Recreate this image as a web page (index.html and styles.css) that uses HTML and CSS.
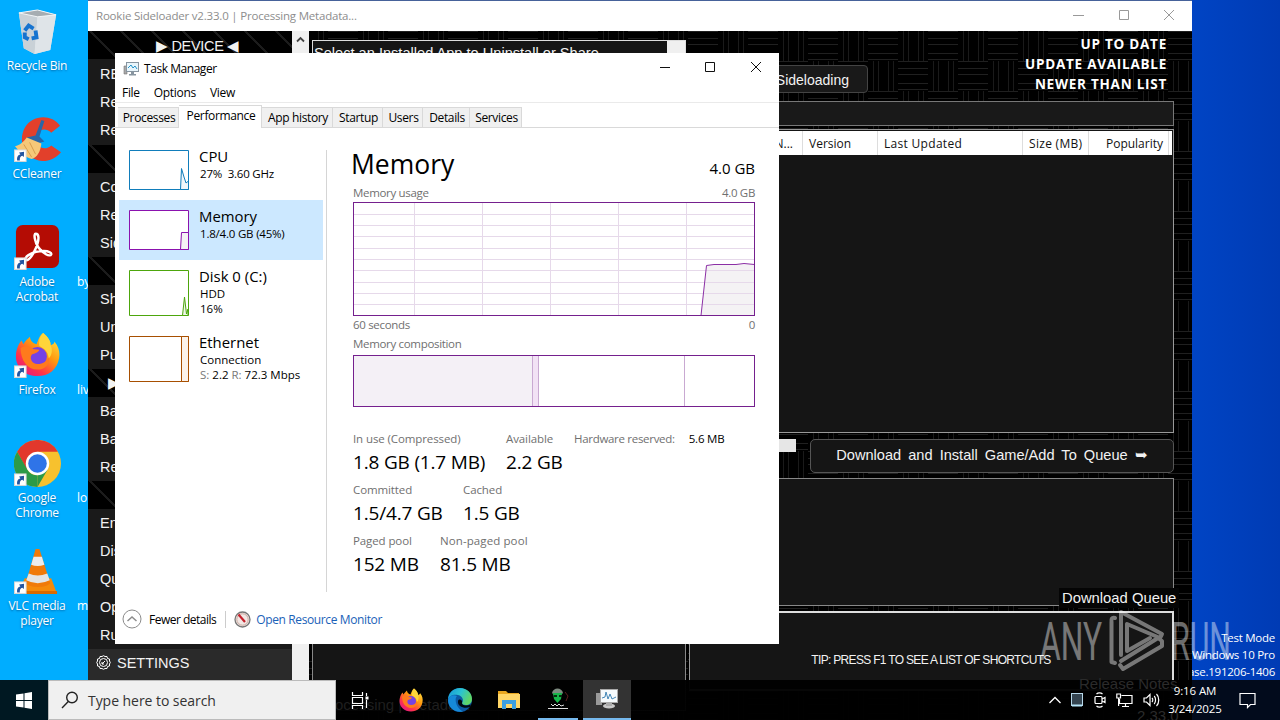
FILE: index.html
```html
<!DOCTYPE html>
<html lang="en">
<head>
  <meta charset="utf-8">
  <title>Desktop</title>
  <link rel="stylesheet" href="styles.css">
</head>
<body>
  <svg class="defs" width="0" height="0">
    <defs>
      <symbol id="shortcut" viewBox="0 0 12 12">
        <rect x=".5" y=".5" width="11" height="11" fill="#fff" stroke="#d5d5d5"/>
        <path d="M3 10.500C2.500 7 4 5 6 4.800L4.800 3L9.500 2.300L9.300 7.200L7.800 6C6 6.500 5.300 8 5.500 10.500Z" fill="#2456a0"/>
      </symbol>
      <linearGradient id="ffBody" x1="1" y1="0" x2="0.2" y2="1">
        <stop offset="0" stop-color="#fff44f"/><stop offset=".45" stop-color="#ff980e"/><stop offset=".75" stop-color="#ff3647"/><stop offset="1" stop-color="#e31587"/>
      </linearGradient>
      <symbol id="firefox" viewBox="0 0 48 48">
        <path d="M30 1C36 6 38 10 38 14C41 13 42 12 42 10C47 16 48 22 47 28C45 40 36 47 24 47C11 47 1 38 1 26C1 19 4 12 7 9L9 13C11 9 14 7 16 5C16 9 19 12 23 13C25 8 26 4 30 1Z" fill="url(#ffBody)"/>
        <circle cx="24" cy="26" r="10" fill="#7542e5"/>
        <path d="M6 17C11 14 16 15 19 18L26 19C25 22 21 23 18 24C15 28 18 34 24 34C30 34 35 31 36 26C38 34 32 40 24 40C13 40 6 30 6 17Z" fill="#ff7a1c"/>
        <path d="M30 1C36 6 38 10 38 14C40 18 40 24 36 28C35 20 31 18 26 15C25 9 27 4 30 1Z" fill="#ffd53a"/>
      </symbol>
      <linearGradient id="edgeTop" x1="0" y1="0" x2="1" y2=".4">
        <stop offset="0" stop-color="#1595d8"/><stop offset=".55" stop-color="#2bc3d2"/><stop offset="1" stop-color="#5fd668"/>
      </linearGradient>
      <pattern id="weave" x="808" y="31" width="60" height="60" patternUnits="userSpaceOnUse">
        <g stroke="#202020">
          <path d="M0 .5H30M0 7.500H30M0 13.500H30M0 22.500H30M0 28.500H30"/>
          <path d="M35.500 0V30M40.500 0V30M50.500 0V30M55.500 0V30" stroke="#1a1a1a"/>
          <path d="M30 30.500H60M30 37.500H60M30 43.500H60M30 52.500H60M30 58.500H60"/>
          <path d="M5.500 30V60M10.500 30V60M20.500 30V60M25.500 30V60" stroke="#1a1a1a"/>
        </g>
      </pattern>
    </defs>
  </svg>

  <div class="desktop">
    <div class="shortcuts">
      <div class="shortcut">
        <svg class="shortcut-icon" viewBox="0 0 48 48">
          <path d="M5 5L24 2L43 7L37 43L21 47L10 41Z" fill="#dfe5e9"/>
          <path d="M5 5L24 9L21 47L10 41Z" fill="#c9d1d7"/>
          <path d="M24 9L43 7L37 43L21 47Z" fill="#dfe4e8"/>
          <path d="M5 5L24 2L43 7L24 9Z" fill="#a6adb2" stroke="#f3f6f8"/>
          <g fill="none" stroke="#1673cf" stroke-width="4"><path d="M11 23L15 18L20 21"/><path d="M22 23L23 30L18 31"/><path d="M15 32L11 30L11 25"/></g>
        </svg>
        <span>Recycle Bin</span>
      </div>
      <div class="shortcut">
        <svg class="shortcut-icon" viewBox="0 0 48 48">
          <path d="M47 10C38-3 18-1 11 12C3 27 12 45 29 46C37 46 43 43 48 37L38 30C32 36 22 32 22 23C22 14 32 11 38 17Z" fill="#e2402b"/>
          <path d="M28 4L31 5L26 21L31 26L20 29L13 22L22 20Z" fill="#2867a8"/>
          <path d="M13 22L28 28C27 36 24 42 18 44C10 42 5 36 1 31C6 30 10 26 13 22Z" fill="#f6c878"/>
          <path d="M10 29L18 42M16 27L22 39" stroke="#d69c4c"/>
          <use href="#shortcut" x="0" y="34" width="13" height="13"/>
        </svg>
        <span>CCleaner</span>
      </div>
      <div class="shortcut">
        <svg class="shortcut-icon" viewBox="0 0 48 48">
          <rect x="2" y="1" width="44" height="44" rx="7" fill="#b40c04"/>
          <path d="M22 10C20 10 21 18 25 24C29 30 37 34 38 31C39 27 25 26 16 31C12 33 10 37 13 37C18 36 25 21 25 14C25 11 24 10 22 10Z" fill="none" stroke="#fff" stroke-width="2.500"/>
          <use href="#shortcut" x="0" y="34" width="13" height="13"/>
        </svg>
        <span>Adobe<br>Acrobat</span>
      </div>
      <div class="shortcut">
        <svg class="shortcut-icon" viewBox="0 0 48 48">
          <use href="#firefox" x="1" y="0" width="46" height="46"/>
          <use href="#shortcut" x="0" y="34" width="13" height="13"/>
        </svg>
        <span>Firefox</span>
      </div>
      <div class="shortcut">
        <svg class="shortcut-icon" viewBox="0 0 48 48">
          <circle cx="24" cy="24" r="24" fill="#f7c12e"/>
          <path d="M24 24L13 30L3.200 12A24 24 0 0 1 44.800 12H24Z" fill="#e2382c"/>
          <path d="M3.200 12L13.600 30A12 12 0 0 0 24 36L24 48A24 24 0 0 1 3.200 12Z" fill="#2c9a47"/>
          <path d="M24 36L34.400 30L24 48Z" fill="#2c9a47"/>
          <circle cx="24" cy="24" r="12" fill="#fff"/><circle cx="24" cy="24" r="9.500" fill="#2f74e8"/>
          <use href="#shortcut" x="0" y="34" width="13" height="13"/>
        </svg>
        <span>Google<br>Chrome</span>
      </div>
      <div class="shortcut">
        <svg class="shortcut-icon" viewBox="0 0 48 48">
          <path d="M11 31H38L44 47H4Z" fill="#f58a0b"/>
          <path d="M4 44H44V47H4Z" fill="#d96a00"/>
          <path d="M22 1H26L37 36C33 41 16 41 12 36Z" fill="#f07a0a"/>
          <path d="M20 9H28.500L31 17Q24 20 17.500 17Z" fill="#ececec"/>
          <path d="M15 26Q24 30 34 26L36.500 33Q24 39 12.500 33Z" fill="#e4e4e4"/>
          <use href="#shortcut" x="0" y="34" width="13" height="13"/>
        </svg>
        <span>VLC media<br>player</span>
      </div>
    </div>
    <div class="file-labels">
      <span>by</span><span>liv</span><span>lo</span><span>m</span>
    </div>
    <div class="build-info">Test Mode<br>Windows 10 Pro<br><span>Build 19041.vb_release.191206-1406</span></div>

    <!-- Sideloader window -->
    <div class="sideloader">
      <div class="sl-titlebar">
        <span>Rookie Sideloader v2.33.0 | Processing Metadata...</span>
        <svg width="104" height="12" viewBox="0 0 104 12" fill="none" stroke="#999"><path d="M1 6.500H12M47.500 1.500H56.500V10.500H47.500ZM92 1L102 11M102 1L92 11"/></svg>
      </div>
      <div class="sl-body">
        <div class="sl-menu">
          <div class="sl-head sl-device">▶ DEVICE ◀</div>
          <div class="sl-group sl-first"><div>RE</div><div>Re</div><div>Re</div></div>
          <div class="sl-head"></div>
          <div class="sl-group"><div>Co</div><div>Re</div><div>Sid</div></div>
          <div class="sl-head"></div>
          <div class="sl-group"><div>Sh</div><div>Un</div><div>Pu</div></div>
          <div class="sl-head sl-arrow">▶</div>
          <div class="sl-group"><div>Ba</div><div>Ba</div><div>Re</div></div>
          <div class="sl-head"></div>
          <div class="sl-group"><div>En</div><div>Dis</div><div>Qu</div><div>Op</div><div>Ru</div></div>
          <div class="sl-settings">
            <svg width="15" height="15" viewBox="0 0 15 15" fill="none" stroke="#fff"><path d="M4 1.500H6L7.500.7L9 1.500H11L11.500 3.500L13.500 4V6L14.300 7.500L13.500 9V11L11.500 11.500L11 13.500H9L7.500 14.300L6 13.500H4L3.500 11.500L1.500 11V9L.7 7.500L1.500 6V4L3.500 3.500Z"/><circle cx="7.500" cy="7.500" r="4"/><path d="M6 9L9 6M6 7V9H8"/></svg>
            <span>SETTINGS</span>
          </div>
        </div>
        <div class="sl-scroll">
          <svg width="17" height="17" viewBox="0 0 17 17"><path d="M5 10.500L8.500 7L12 10.500" fill="none" stroke="#444" stroke-width="1.800"/></svg>
        </div>
        <div class="sl-main">
          <svg class="sl-weave" viewBox="309 31 883 689"><rect x="309" y="31" width="883" height="689" fill="url(#weave)"/></svg>
          <div class="sl-left">
            <div class="sl-combo"><span>Select an Installed App to Uninstall or Share</span><i></i></div>
            <div class="sl-notes"></div>
          </div>
          <div class="sl-right">
            <div class="sl-top">
              <div class="sl-button">Disable Sideloading</div>
              <div class="sl-legend">UP TO DATE<br>UPDATE AVAILABLE<br>NEWER THAN LIST</div>
            </div>
            <div class="sl-search"></div>
            <div class="sl-list">
              <div class="sl-columns">
                <div class="c-name">N...</div><div class="c-version">Version</div><div class="c-updated">Last Updated</div><div class="c-size">Size (MB)</div><div class="c-pop">Popularity</div>
              </div>
            </div>
            <div class="sl-actions">
              <i></i>
              <div class="sl-download">Download and Install Game/Add To Queue ➥</div>
            </div>
            <div class="sl-queue"><span>Download Queue</span></div>
            <div class="sl-tip">TIP: PRESS F1 TO SEE A LIST OF SHORTCUTS</div>
          </div>
        </div>
      </div>
    </div>

    <!-- Task Manager window -->
    <div class="taskmgr">
      <div class="tm-titlebar">
        <svg width="16" height="16" viewBox="0 0 16 16"><path d="M1 5H4V13H1Z" fill="#a8a8a8" stroke="#777" stroke-width=".6"/><rect x="3.500" y="1.500" width="12" height="9" fill="#e8f5fb" stroke="#8795a0"/><path d="M5 7L8 4L10 7L12 5L14 8" fill="none" stroke="#2693c9"/><path d="M8 11H11V13H13V14.500H6V13H8Z" fill="#8795a0"/></svg>
        <span>Task Manager</span>
        <svg class="tm-controls" width="104" height="12" viewBox="0 0 104 12" fill="none" stroke="#111"><path d="M2 6.500H12M47.500 1.500H56.500V10.500H47.500ZM93 1L103 11M103 1L93 11"/></svg>
      </div>
      <div class="tm-menu"><span>File</span><span>Options</span><span>View</span></div>
      <div class="tm-tabs">
        <div class="t-processes">Processes</div><div class="t-performance active">Performance</div><div class="t-history">App history</div><div class="t-startup">Startup</div><div class="t-users">Users</div><div class="t-details">Details</div><div class="t-services">Services</div>
      </div>
      <div class="tm-content">
        <div class="tm-list">
          <div class="tm-item">
            <svg width="60" height="40" viewBox="0 0 60 40"><path d="M.5.500H59.500V39.500H.5Z" fill="#fff" stroke="#117dbb"/><path d="M51.500 39.500L52.500 18.500L55 27L57 33L59.500 31V39.500Z" fill="#f1f6fa" stroke="#117dbb"/></svg>
            <div><h3>CPU</h3><p class="tight">27%&nbsp; 3.60 GHz</p></div>
          </div>
          <div class="tm-item selected">
            <svg width="60" height="40" viewBox="0 0 60 40"><path d="M.5.500H59.500V39.500H.5Z" fill="#fff" stroke="#8b12ae"/><path d="M51.500 39.500L52.500 22.500H59.500V39.500Z" fill="#f4f2f4" stroke="#8b12ae"/></svg>
            <div><h3>Memory</h3><p class="tight">1.8/4.0 GB (45%)</p></div>
          </div>
          <div class="tm-item">
            <svg width="60" height="46" viewBox="0 0 60 46"><path d="M.5.500H59.500V45.500H.5Z" fill="#fff" stroke="#4da60c"/><path d="M53.500 45.500L55.500 27L57.500 44L59 39V45.500Z" fill="#eff7e9" stroke="#4da60c"/></svg>
            <div><h3>Disk 0 (C:)</h3><p>HDD</p><p>16%</p></div>
          </div>
          <div class="tm-item">
            <svg width="60" height="46" viewBox="0 0 60 46"><path d="M.5.500H59.500V45.500H.5Z" fill="#fff" stroke="#a74f01"/><path d="M52.500.500H59.500V45.500H52.500Z" fill="#fcf3eb" stroke="#a74f01"/></svg>
            <div><h3>Ethernet</h3><p>Connection</p><p><em>S:</em> 2.2 <em>R:</em>&nbsp;72.3 Mbps</p></div>
          </div>
        </div>
        <div class="tm-detail">
          <div class="tm-heading"><h1>Memory</h1><span>4.0 GB</span></div>
          <div class="tm-caption c-usage"><span>Memory usage</span><span>4.0 GB</span></div>
          <svg class="tm-graph" width="402" height="114" viewBox="0 0 402 114">
            <path d="M348 113.500L353.500 63.500L361 62.500H383L391 61.500L401.500 62.500V113.500Z" fill="#f4f2f4"/>
            <path d="M61.500 0V114M129.500 0V114M197.500 0V114M265.500 0V114M333.500 0V114M0 12.500H402M0 23.500H402M0 34.500H402M0 46.500H402M0 57.500H402M0 68.500H402M0 80.500H402M0 91.500H402M0 102.500H402" stroke="#e6d9ea"/>
            <path d="M348 113.500L353.500 63.500L361 62.500H383L391 61.500L401.500 62.500" fill="none" stroke="#8b2fa5"/>
            <rect x=".5" y=".5" width="401" height="113" fill="none" stroke="#75208e"/>
          </svg>
          <div class="tm-caption c-seconds"><span>60 seconds</span><span>0</span></div>
          <div class="tm-caption c-comp"><span>Memory composition</span></div>
          <svg class="tm-graph" width="402" height="52" viewBox="0 0 402 52">
            <path d="M0 0H180V52H0Z" fill="#f4f0f6"/><path d="M180 0H185V52H180Z" fill="#f2e2f5"/>
            <path d="M179.500 0V52M185.500 0V52M331.500 0V52" stroke="#c9a9d2"/>
            <rect x=".5" y=".5" width="401" height="51" fill="none" stroke="#75208e"/>
          </svg>
          <div class="tm-stats">
            <div class="tm-row">
              <div class="s-use"><label>In use (Compressed)</label><b>1.8 GB (1.7 MB)</b></div>
              <div class="s-avail"><label>Available</label><b>2.2 GB</b></div>
              <div class="s-hw"><label>Hardware reserved:</label><span>5.6 MB</span></div>
            </div>
            <div class="tm-row">
              <div class="s-commit"><label>Committed</label><b>1.5/4.7 GB</b></div>
              <div><label>Cached</label><b>1.5 GB</b></div>
            </div>
            <div class="tm-row">
              <div class="s-paged"><label>Paged pool</label><b>152 MB</b></div>
              <div class="s-nonpaged"><label>Non-paged pool</label><b>81.5 MB</b></div>
            </div>
          </div>
        </div>
      </div>
      <div class="tm-footer">
        <svg width="20" height="20" viewBox="0 0 20 20" fill="none"><circle cx="10" cy="10" r="9" stroke="#8c8c8c"/><path d="M5.500 12L10 8L14.500 12" stroke="#8c8c8c" stroke-width="1.500"/></svg>
        <span class="tm-fewer">Fewer details</span>
        <svg width="17" height="17" viewBox="0 0 17 17"><circle cx="8.500" cy="8.500" r="7.500" fill="#f2e7e4" stroke="#777" stroke-width="1.300"/><circle cx="8.500" cy="8.500" r="5.700" fill="none" stroke="#c9a9a0"/><path d="M4.500 3.500L11 11" stroke="#c5202b" stroke-width="2.200"/></svg>
        <span class="tm-link">Open Resource Monitor</span>
      </div>
    </div>

    <!-- Recorder watermark -->
    <svg class="watermark" width="200" height="70" viewBox="1035 605 200 70">
      <g font-family="Roboto" font-size="53" fill="#fff">
        <text x="1040" y="659.500" textLength="62" lengthAdjust="spacingAndGlyphs">ANY</text>
        <text x="1171" y="659.500" textLength="60" lengthAdjust="spacingAndGlyphs">RUN</text>
      </g>
      <g fill="none" stroke="#fff" stroke-width="4" stroke-linejoin="round" stroke-linecap="round">
        <path d="M1115 618C1112 617 1111 619 1111.500 622V662L1115 663"/>
        <path d="M1121 655V612L1162 634L1160 638L1127 624"/>
        <path d="M1120 665L1123 669L1162 646L1162 641L1158 638L1121 661"/>
        <path d="M1127 625V651L1150 638"/>
      </g>
    </svg>

    <div class="taskbar">
      <div class="start"><svg width="17" height="17" viewBox="0 0 17 17" fill="#fff"><path d="M0 2.500L7.500 1.500V8H0ZM8.500 1.300L16 0V8H8.500ZM0 9H7.500V15.500L0 14.500ZM8.500 9H16V17L8.500 15.700Z"/></svg></div>
      <div class="search">
        <svg width="18" height="18" viewBox="0 0 18 18" fill="none" stroke="#222" stroke-width="1.400"><circle cx="11" cy="6.500" r="5.300"/><path d="M7.300 10.500L1 17"/></svg>
        <span>Type here to search</span>
      </div>
      <div class="apps">
        <div class="app"><svg width="18" height="17" viewBox="0 0 18 17" fill="none" stroke="#fff" stroke-width="1.200"><path d="M1.500 0V3.500H11.500V0M1.500 5.500H11.500V11.500H1.500ZM1.500 17V13.500H11.500V17M15.500 1V4M15.500 8V16"/><path d="M14.500 4.500H17.500V7.500H14.500Z" fill="#fff" stroke="none"/></svg></div>
        <div class="app"><svg width="24" height="24"><use href="#firefox" width="24" height="24"/></svg></div>
        <div class="app"><svg width="24" height="24" viewBox="0 0 24 24"><circle cx="12" cy="12" r="12" fill="#0c59a4"/><path d="M0 12C0 5 5 0 12 0C19 0 24 5 24 11C24 15 21 17 18 17C15 17 14 16 14 15C16 13 15 8 10 7C5 6 1 8 0 12Z" fill="url(#edgeTop)"/><path d="M0 12C1 8 5 6 9 8C6 11 8 20 15 23.600C6 25 0 19 0 12Z" fill="#1689d8"/><path d="M14 15C14 17 17 18.500 23 16.500L22 19C17 21 9 19 10 13C11 10 15 12 14 15Z" fill="#010a12"/></svg></div>
        <div class="app"><svg width="22" height="20" viewBox="0 0 22 20"><path d="M0 1H8L10 3H21V18H0Z" fill="#e9a720"/><path d="M0 4H22V18H0Z" fill="#ffd667"/><path d="M4 10H18V19H14V14H8V19H4Z" fill="#3c9fe0"/></svg></div>
        <div class="app running"><svg width="24" height="24" viewBox="0 0 24 24"><path d="M6 6C7 0 16 0 17 6L15 8H8Z" fill="#7d8b80"/><path d="M7 6H16L15 12L11.500 16L8 12Z" fill="#17b649"/><path d="M8 8H11V10H8ZM13 8H16V10H13Z" fill="#052d10"/><path d="M19 5L22 9L20 14" fill="none" stroke="#5b2020"/><path d="M2 21.500H22M5 17L7 19L9 17L11 19L13 17L15 19L18 18" fill="none" stroke="#ddd"/></svg></div>
        <div class="app running current"><svg width="24" height="22" viewBox="0 0 24 22"><path d="M1 5H7V17H1Z" fill="#999"/><rect x="5.500" y="1.500" width="17" height="13" fill="#f5fafc" stroke="#aaa"/><path d="M7 10L10 9L11 4L13 11L15 6L17 11L21 9" fill="none" stroke="#4386b6"/><ellipse cx="14" cy="18" rx="6" ry="2.500" fill="#c9c9c9"/><path d="M11 15H17V18H11Z" fill="#aaa"/></svg></div>
      </div>
      <span class="ghost g-status">Processing | Metadata</span>
      <span class="ghost g-notes">Release Notes</span>
      <span class="ghost g-version">2.33.0</span>
      <div class="tray">
        <svg width="12" height="8" viewBox="0 0 12 8" fill="none" stroke="#fff" stroke-width="1.300"><path d="M.5 7L6 1.500L11.500 7"/></svg>
        <svg width="12" height="14" viewBox="0 0 12 14"><rect x=".5" y=".5" width="11" height="12" fill="#344450" stroke="#b7d8ea"/><path d="M1 11.500H11V13.500H1Z" fill="#b7e5f8"/></svg>
        <svg width="12" height="16" viewBox="0 0 12 16" fill="none" stroke="#fff" stroke-width="1.200"><rect x="1" y="4.500" width="7" height="7" rx="1"/><path d="M8 7L11 5.500V10.500L8 9M2.500 2C4 .6 7 .6 8.500 2M2.500 14C4 15.400 7 15.400 8.500 14"/></svg>
        <svg width="17" height="15" viewBox="0 0 17 15" fill="none" stroke="#fff" stroke-width="1.200"><path d="M5.500 2.500H16V10.500H3.500V6M6 13.500H13M9.500 10.500V13.500M.8 1H4.500V5H.8ZM2.600 5V13"/></svg>
        <svg width="17" height="14" viewBox="0 0 17 14" fill="none" stroke="#fff" stroke-width="1.200"><path d="M1 5H3.500L7 1.500V12.500L3.500 9H1ZM9 5C10 6 10 8 9 9M11.200 3C13 5 13 9 11.200 11M13.500 1C16.500 4 16.500 10 13.500 13"/></svg>
      </div>
      <div class="clock"><span>9:16 AM</span><span>3/24/2025</span></div>
      <svg class="notify" width="17" height="17" viewBox="0 0 17 17" fill="none" stroke="#fff" stroke-width="1.200"><path d="M1 1.500H16V12.500H11.500L8.500 15.500V12.500H1Z"/></svg>
    </div>
  </div>
</body>
</html>
```
FILE: styles.css
```css
* {
  box-sizing: border-box;
}
body {
  margin: 0;
  font-family: "Open Sans", "Noto Sans", sans-serif;
  font-size: 12px;
}
h1, h3, p {
  margin: 0;
  font-weight: normal;
}
i, em {
  font-style: normal;
}
.defs {
  position: absolute;
}
.desktop {
  position: relative;
  width: 1280px;
  height: 720px;
  overflow: hidden;
  background: linear-gradient(90deg, #00adff 0, #00adff 88px, #46629a 88px, #46629a 1192px, #0044c4 1192px, #003bb4 100%);
}

/* desktop icons */
.shortcuts {
  width: 74px;
  padding-top: 8px;
  display: grid;
  grid-auto-rows: 108px;
}
.shortcut {
  display: flex;
  flex-direction: column;
  align-items: center;
  color: #fff;
  line-height: 15px;
  text-align: center;
  letter-spacing: -.2px;
  text-shadow: 0 1px 2px rgba(0, 40, 90, .5);
}
.shortcut-icon {
  width: 47px;
  height: 47px;
  margin-bottom: 3px;
}
.file-labels {
  position: absolute;
  left: 77px;
  top: 274px;
  display: grid;
  grid-auto-rows: 108px;
  color: #fff;
  line-height: 15px;
}
.build-info {
  position: absolute;
  right: 5px;
  top: 629px;
  color: #fff;
  font-size: 11.500px;
  line-height: 17px;
  text-align: right;
  letter-spacing: -.25px;
  white-space: nowrap;
}

/* sideloader */
.sideloader {
  position: absolute;
  left: 88px;
  top: 1px;
  width: 1104px;
  height: 719px;
  background: #000;
  color: #f2f2f2;
  font-family: "Liberation Sans", sans-serif;
}
.sl-titlebar {
  height: 30px;
  padding: 0 16px 0 8px;
  display: flex;
  align-items: center;
  justify-content: space-between;
  background: #fff;
  color: #8d8d8d;
  font-family: "Open Sans", sans-serif;
  font-size: 11.500px;
  letter-spacing: -.2px;
}
.sl-titlebar span {
  margin-top: -1px;
}
.sl-titlebar svg {
  margin-top: -2px;
}
.sl-body {
  display: flex;
  height: 689px;
}
.sl-menu {
  width: 204px;
  font-size: 14.500px;
}
.sl-head {
  height: 28px;
  line-height: 28px;
  padding-left: 20px;
  background: repeating-linear-gradient(45deg, #000 0, #000 20px, #1c1c1c 20px, #1c1c1c 22px);
}
.sl-device {
  padding: 0 0 0 15px;
  line-height: 30px;
  text-align: center;
  letter-spacing: -.3px;
}
.sl-group {
  background: #1a1a1a;
}
.sl-group div {
  height: 28px;
  line-height: 28px;
  padding-left: 12px;
}
.sl-first {
  height: 86px;
  padding-top: 1px;
}
.sl-settings {
  height: 40px;
  padding: 0 8px 13px;
  display: flex;
  align-items: center;
  gap: 6px;
  background: #2a2a2a;
}
.sl-scroll {
  width: 17px;
  background: #f0f0f0;
}
.sl-main {
  position: relative;
  width: 883px;
  padding: 0 18px 0 3px;
  display: flex;
  gap: 3px;
}
.sl-weave {
  position: absolute;
  left: 0;
  top: 0;
  width: 883px;
  height: 689px;
}
.sl-left {
  position: relative;
  width: 374px;
  padding-top: 9px;
}
.sl-combo {
  height: 26px;
  display: flex;
  justify-content: space-between;
  background: #151515;
  border: 1px solid #ddd;
  font-size: 14.600px;
  line-height: 25px;
  white-space: nowrap;
}
.sl-combo span {
  padding-left: 1px;
}
.sl-combo i {
  width: 18px;
  background: #f0f0f0;
}
.sl-notes {
  height: 640px;
  margin-top: 5px;
  background: #151515;
  border: 1px solid #888;
}
.sl-right {
  position: relative;
  width: 485px;
  display: flex;
  flex-direction: column;
}
.sl-top {
  height: 70px;
  display: flex;
  justify-content: space-between;
}
.sl-button {
  width: 179px;
  height: 28px;
  margin-top: 34px;
  padding-right: 18px;
  background: #191919;
  border: 1px solid #444;
  border-radius: 4px;
  font-size: 14px;
  line-height: 28px;
  text-align: right;
}
.sl-legend {
  padding: 3px 7px 0 0;
  color: #fff;
  font-family: "Open Sans", sans-serif;
  font-size: 13.500px;
  font-weight: bold;
  line-height: 20px;
  text-align: right;
  letter-spacing: .75px;
}
.sl-search {
  height: 25px;
  background: #191919;
  border: 1px solid #777;
}
.sl-list {
  height: 304px;
  margin-top: 3px;
  padding: 1px;
  background: #151515;
  border: 1px solid #999;
}
.sl-columns {
  height: 24px;
  display: flex;
  background: #fff;
  color: #111;
  font-family: "Open Sans", sans-serif;
  font-size: 12px;
  line-height: 25px;
}
.sl-columns div {
  padding: 0 6px;
  border-right: 1px solid #ddd;
  white-space: nowrap;
}
.sl-columns .c-name {
  width: 112px;
  text-align: right;
  padding-right: 9px;
}
.sl-columns .c-version {
  width: 75px;
}
.sl-columns .c-updated {
  width: 145px;
  letter-spacing: .3px;
}
.sl-columns .c-size {
  width: 66px;
  letter-spacing: .3px;
}
.sl-columns .c-pop {
  width: 80px;
  padding-right: 5px;
  text-align: right;
}
.sl-actions {
  margin-top: 6px;
  display: flex;
  justify-content: space-between;
}
.sl-actions i {
  width: 107px;
  height: 13px;
  background: #e6e6e6;
}
.sl-download {
  width: 364px;
  height: 34px;
  background: #151515;
  border: 1px solid #555;
  border-radius: 5px;
  font-size: 14.600px;
  line-height: 31px;
  text-align: center;
  word-spacing: 3px;
}
.sl-queue {
  height: 128px;
  margin-top: 5px;
  background: #151515;
  border: 1px solid #888;
}
.sl-queue span {
  position: absolute;
  right: -5px;
  top: 557px;
  width: 120px;
  height: 20px;
  padding-left: 3px;
  background: #050505;
  font-size: 14.800px;
  line-height: 20px;
  white-space: nowrap;
}
.sl-tip {
  height: 80px;
  margin-top: 5px;
  background: #151515;
  border: 2px solid #ddd;
  border-left: 1px solid #999;
  font-size: 12px;
  line-height: 94px;
  text-align: center;
  letter-spacing: -.68px;
}

/* task manager */
.taskmgr {
  position: absolute;
  left: 115px;
  top: 53px;
  width: 664px;
  height: 591px;
  background: #fff;
  color: #000;
}
.tm-titlebar {
  height: 29px;
  padding: 2px 17px 0 8px;
  display: flex;
  align-items: center;
  gap: 5px;
  letter-spacing: -.5px;
}
.tm-titlebar span {
  margin-top: -1px;
  letter-spacing: -.45px;
}
.tm-controls {
  margin-left: auto;
  margin-top: -4px;
}
.tm-menu {
  height: 21px;
  padding-left: 7px;
  display: flex;
  gap: 14px;
  border-bottom: 1px solid #eaeaea;
  line-height: 22px;
  letter-spacing: -.3px;
}
.tm-tabs {
  height: 25px;
  padding-left: 3px;
  display: flex;
  align-items: flex-end;
  border-bottom: 1px solid #d9d9d9;
}
.tm-tabs div {
  height: 20px;
  padding-left: 2px;
  background: #f0f0f0;
  border: 1px solid #d9d9d9;
  border-width: 1px 1px 0 0;
  line-height: 20px;
  letter-spacing: -.35px;
  text-align: center;
  white-space: nowrap;
}
.tm-tabs .active {
  height: 23px;
  margin-bottom: -1px;
  background: #fff;
}
.t-processes {
  width: 61px;
}
.t-performance {
  width: 83px;
}
.t-history {
  width: 71px;
}
.t-startup {
  width: 50px;
}
.t-users {
  width: 40px;
}
.t-details {
  width: 47px;
}
.t-services {
  width: 52px;
}
.tm-content {
  height: 477px;
  padding: 12px 0 0 4px;
  display: flex;
}
.tm-list {
  width: 204px;
}
.tm-item {
  padding: 10px;
  display: flex;
  gap: 10px;
  line-height: 15px;
  white-space: nowrap;
}
.tm-item.selected {
  background: #cce8ff;
}
.tm-item svg {
  flex: none;
}
.tm-item > div {
  height: 40px;
  margin-top: -3px;
}
.tm-item h3 {
  font-size: 14.900px;
  line-height: 19px;
}
.tm-item p {
  padding-left: 1px;
  font-size: 11.500px;
}
.tm-item .tight {
  letter-spacing: -.2px;
}
.tm-item em {
  color: #777;
}
.tm-detail {
  width: 429px;
  height: 442px;
  margin: 10px 0 0 3px;
  padding-left: 26px;
  border-left: 1px solid #d5d5d5;
}
.tm-heading {
  width: 402px;
  height: 36px;
  margin-top: -2px;
  display: flex;
  justify-content: space-between;
  align-items: baseline;
}
.tm-heading h1 {
  margin-left: -2px;
  font-size: 26.500px;
  line-height: 32px;
}
.tm-heading span {
  font-size: 15px;
}
.tm-caption {
  width: 402px;
  display: flex;
  justify-content: space-between;
  color: #707070;
  font-size: 11.500px;
  letter-spacing: -.32px;
}
.tm-graph {
  display: block;
}
.c-usage {
  height: 18px;
  line-height: 18px;
}
.c-seconds {
  height: 19px;
  line-height: 17px;
}
.c-comp {
  height: 20px;
  line-height: 18px;
}
.tm-stats {
  padding-top: 24px;
}
.tm-row {
  height: 51px;
  display: flex;
  gap: 20px;
  white-space: nowrap;
}
.tm-row label {
  display: block;
  color: #707070;
  font-size: 11.500px;
  line-height: 16px;
  letter-spacing: -.1px;
}
.tm-row b {
  display: block;
  font-size: 19px;
  font-weight: normal;
  line-height: 30px;
  letter-spacing: -.18px;
}
.s-use {
  width: 133px;
}
.s-avail {
  width: 48px;
}
.s-hw {
  display: flex;
  gap: 14px;
  font-size: 11.500px;
  line-height: 16px;
  letter-spacing: -.2px;
}
.s-hw label {
  letter-spacing: -.3px;
}
.s-commit {
  width: 90px;
}
.s-paged {
  width: 67px;
}
.s-nonpaged label {
  letter-spacing: .1px;
}
.tm-footer {
  padding: 4px 0 0 7px;
  display: flex;
  align-items: center;
}
.tm-fewer {
  margin: 0 8px 0 7px;
  padding-right: 9px;
  border-right: 1px solid #ccc;
  letter-spacing: -.5px;
}
.tm-link {
  margin-left: 5px;
  color: #1a62b8;
  letter-spacing: -.38px;
}

.watermark {
  position: absolute;
  left: 1035px;
  top: 605px;
  opacity: .42;
}

/* taskbar */
.taskbar {
  position: absolute;
  left: 0;
  top: 680px;
  width: 1280px;
  height: 40px;
  display: flex;
  background: linear-gradient(90deg, rgba(0, 0, 0, .97) 1192px, #020b1c 1192px);
}
.start {
  width: 48px;
  display: flex;
  align-items: center;
  justify-content: center;
  background: #001822;
}
.search {
  z-index: 1;
  width: 288px;
  padding: 0 12px;
  display: flex;
  align-items: center;
  gap: 9px;
  background: #f0f0f0;
  border: 1px solid #bbb;
  color: #333;
  font-size: 14px;
  letter-spacing: -.05px;
}
.apps {
  z-index: 1;
  display: flex;
  gap: 1px;
}
.app {
  width: 48px;
  display: flex;
  align-items: center;
  justify-content: center;
}
.running {
  border-bottom: 2px solid #76b9ed;
}
.app:nth-child(2) {
  padding-left: 3px;
}
.app:nth-child(3), .app:nth-child(4) {
  padding-left: 4px;
}
.app:nth-child(5) {
  width: 40px;
  margin: 0 4px 0 6px;
}
.current {
  background: #333;
}
.tray {
  z-index: 1;
  margin-left: auto;
  width: 111px;
  display: flex;
  align-items: center;
  justify-content: space-between;
}
.clock {
  z-index: 1;
  width: 70px;
  padding-top: 2px;
  color: #fff;
  font-size: 11.500px;
  line-height: 18px;
  text-align: center;
  letter-spacing: -.1px;
  display: flex;
  flex-direction: column;
}
.notify {
  margin: 12px 24px 0 9px;
}
.ghost {
  position: absolute;
  color: #2b2b2b;
  font-family: "Liberation Sans", sans-serif;
  font-size: 15px;
  line-height: 17px;
}
.g-status {
  left: 320px;
  top: 16px;
  color: #1f1f1f;
}
.g-notes {
  left: 1079px;
  top: -5px;
}
.g-version {
  left: 1137px;
  top: 27px;
}
```
